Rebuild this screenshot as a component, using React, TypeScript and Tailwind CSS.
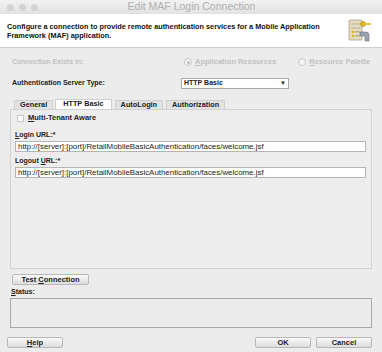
import type { ReactNode } from 'react'

const font = "font-['Liberation_Sans','Arial',sans-serif]"

function Btn({ children, className = '' }: { children: ReactNode; className?: string }) {
  return (
    <div
      className={`h-[11px] flex items-center justify-center bg-gradient-to-b from-[#fafafa] to-[#dcdcdc] border border-[#b8b8b8] rounded-[2px] text-[7.5px] font-bold text-[#222] ${className}`}
    >
      <span>{children}</span>
    </div>
  )
}

function Radio({ checked }: { checked?: boolean }) {
  return (
    <span className="w-[8px] h-[8px] rounded-full border border-[#c8c8c8] bg-[#f6f6f6] flex items-center justify-center">
      {checked && <span className="w-[3px] h-[3px] rounded-full bg-[#bdbdbd]" />}
    </span>
  )
}

function ServerIcon() {
  return (
    <svg width="24" height="26" viewBox="0 0 24 26">
      <rect x="1" y="2" width="13" height="20" rx="1" fill="#e4dcc0" stroke="#a8a08a" strokeWidth="0.8" />
      <rect x="3" y="5" width="9" height="2" fill="#cfc6a8" />
      <rect x="3" y="9" width="9" height="2" fill="#cfc6a8" />
      <circle cx="5" cy="14" r="1.2" fill="#d9b21a" />
      <circle cx="5" cy="18" r="1.2" fill="#d9b21a" />
      <rect x="7" y="13" width="5" height="1.5" fill="#b8ae90" />
      <rect x="7" y="17" width="5" height="1.5" fill="#b8ae90" />
      <circle cx="15" cy="6" r="2.5" fill="#e0b820" stroke="#a88410" strokeWidth="0.6" />
      <rect x="16" y="5.2" width="7" height="1.6" fill="#e0b820" />
      <path d="M12 14 h6 a3 3 0 0 1 3 3 v6 h-4 v-5 h-5 z" fill="#9aa3ad" stroke="#6d747c" strokeWidth="0.6" />
    </svg>
  )
}

export default function App() {
  return (
    <div className={`w-[382px] h-[352px] bg-[#ececec] flex flex-col ${font} text-[#222] overflow-hidden`}>
      {/* title bar */}
      <div className="h-[14px] flex items-center bg-gradient-to-b from-[#f2f2f2] to-[#e2e2e2] px-[7px]">
        <div className="flex gap-[5px]">
          <span className="w-[7px] h-[7px] rounded-full bg-[#d3d3d3]" />
          <span className="w-[7px] h-[7px] rounded-full bg-[#d3d3d3]" />
          <span className="w-[7px] h-[7px] rounded-full bg-[#d3d3d3]" />
        </div>
        <div className="flex-1 text-center text-[10.5px] text-[#b0b0b0] pr-[30px]">Edit MAF Login Connection</div>
      </div>

      {/* header */}
      <div className="h-[34px] bg-white flex items-center justify-between pl-[7px] pr-[10px] border-b border-[#d0d0d0]">
        <div className="text-[7.3px] font-bold leading-[9px] text-[#111] whitespace-nowrap">
          Configure a connection to provide remote authentication services for a Mobile Application
          <br />
          Framework (MAF) application.
        </div>
        <ServerIcon />
      </div>

      <div className="flex-1 flex flex-col px-[10px]">
        {/* connection exists */}
        <div className="h-[22px] mt-[3px] flex items-center text-[7px] font-bold">
          <span className="w-[174px] pl-[2px] text-[#c0c0c0]">Connection Exists in:</span>
          <span className="flex items-center gap-[3px] text-[#c0c0c0]">
            <Radio checked />
            <span className="text-[7.5px]">
              <span className="underline">A</span>pplication Resources
            </span>
          </span>
          <span className="flex items-center gap-[3px] ml-[22px] text-[#c0c0c0]">
            <Radio />
            <span className="text-[7.5px]">
              <span className="underline">R</span>esource Palette
            </span>
          </span>
        </div>

        {/* auth server type */}
        <div className="h-[16px] mt-[2px] flex items-center text-[7px] font-bold">
          <span className="w-[171px] pl-[2px]">Authentication Server Type:</span>
          <div className="w-[108px] h-[11px] bg-white border border-[#a9a9a9] flex items-center justify-between px-[2px] text-[7px] font-bold">
            <span>HTTP Basic</span>
            <span className="text-[6px]">▼</span>
          </div>
        </div>

        {/* tabs */}
        <div className="mt-[8px] flex items-end h-[10px] pl-[4px] text-[7.3px] font-bold">
          <div className="h-[9px] px-[5px] flex items-center bg-[#e2e2e2] border border-b-0 border-[#cfcfcf]">General</div>
          <div className="h-[10px] px-[7px] flex items-center bg-white border border-b-0 border-[#cfcfcf] ml-[2px]">HTTP Basic</div>
          <div className="h-[9px] px-[5px] flex items-center bg-[#e2e2e2] border border-b-0 border-[#cfcfcf] ml-[3px]">AutoLogin</div>
          <div className="h-[9px] px-[5px] flex items-center bg-[#e2e2e2] border border-b-0 border-[#cfcfcf] ml-[3px]">Authorization</div>
        </div>
        <div className="h-[160px] border border-[#d2d2d2] bg-[#ededed] flex flex-col px-[4px] pt-[3px] text-[7px] font-bold">
          <div className="flex items-center gap-[4px] h-[10px] pl-[2px]">
            <span className="w-[7px] h-[7px] bg-white border border-[#c8c8c8]" />
            <span className="text-[7.5px]">
              <span className="underline">M</span>ulti-Tenant Aware
            </span>
          </div>
          <div className="mt-[8px] h-[8px] leading-[8px]">
            <span className="underline">L</span>ogin URL:*
          </div>
          <div className="mt-[2px] h-[11px] bg-white border border-[#b5b5b5] flex items-center px-[2px] text-[7.9px] mr-[1px] font-normal">
            http://[server]:[port]/RetailMobileBasicAuthentication/faces/welcome.jsf
          </div>
          <div className="mt-[5px] h-[8px] leading-[8px]">
            Logout <span className="underline">U</span>RL:*
          </div>
          <div className="mt-[2px] h-[11px] bg-white border border-[#b5b5b5] flex items-center px-[2px] text-[7.9px] mr-[1px] font-normal">
            http://[server]:[port]/RetailMobileBasicAuthentication/faces/welcome.jsf
          </div>
        </div>

        {/* test connection */}
        <Btn className="mt-[5px] w-[77px] ml-[2px]">
          Test <span className="underline">C</span>onnection
        </Btn>
        <div className="mt-[3px] h-[8px] leading-[8px] text-[7px] font-bold pl-[1px]">
          <span className="underline">S</span>tatus:
        </div>
        <div className="mt-[2px] h-[30px] border border-[#a8a8a8] bg-[#ececec]" />

        {/* footer */}
        <div className="mt-[9px] flex items-center">
          <Btn className="w-[56px] -ml-[3px]">
            <span className="underline">H</span>elp
          </Btn>
          <div className="flex-1" />
          <Btn className="w-[56px] border-[#8fb2d6]">OK</Btn>
          <Btn className="w-[56px] ml-[5px]">Cancel</Btn>
        </div>
      </div>
    </div>
  )
}
